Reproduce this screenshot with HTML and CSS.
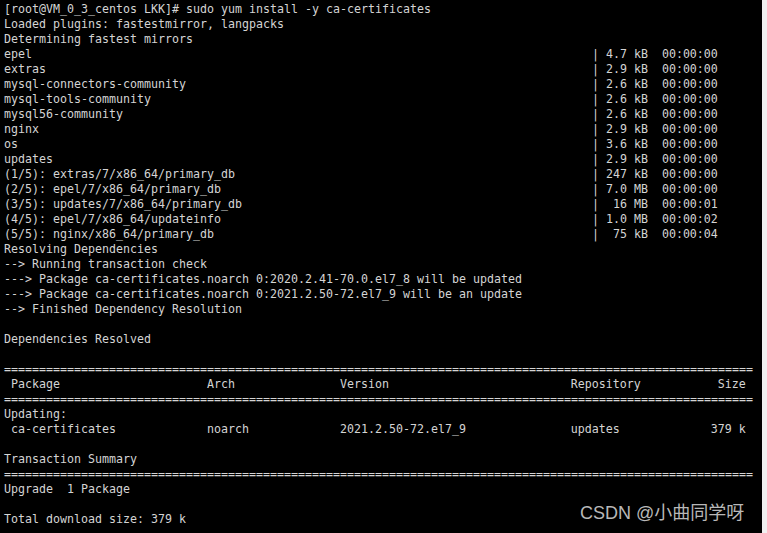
FILE: index.html
```html
<!DOCTYPE html>
<html>
<head>
<meta charset="utf-8">
<link rel="stylesheet" href="styles.css">
</head>
<body>
<div class="screen">
  <div class="term">
    <div class="ln">[root@VM_0_3_centos LKK]# sudo yum install -y ca-certificates</div>
    <div class="ln">Loaded plugins: fastestmirror, langpacks</div>
    <div class="ln">Determining fastest mirrors</div>
    <div class="ln"><span class="nm">epel</span>| 4.7 kB  00:00:00</div>
    <div class="ln"><span class="nm">extras</span>| 2.9 kB  00:00:00</div>
    <div class="ln"><span class="nm">mysql-connectors-community</span>| 2.6 kB  00:00:00</div>
    <div class="ln"><span class="nm">mysql-tools-community</span>| 2.6 kB  00:00:00</div>
    <div class="ln"><span class="nm">mysql56-community</span>| 2.6 kB  00:00:00</div>
    <div class="ln"><span class="nm">nginx</span>| 2.9 kB  00:00:00</div>
    <div class="ln"><span class="nm">os</span>| 3.6 kB  00:00:00</div>
    <div class="ln"><span class="nm">updates</span>| 2.9 kB  00:00:00</div>
    <div class="ln"><span class="nm">(1/5): extras/7/x86_64/primary_db</span>| 247 kB  00:00:00</div>
    <div class="ln"><span class="nm">(2/5): epel/7/x86_64/primary_db</span>| 7.0 MB  00:00:00</div>
    <div class="ln"><span class="nm">(3/5): updates/7/x86_64/primary_db</span>|  16 MB  00:00:01</div>
    <div class="ln"><span class="nm">(4/5): epel/7/x86_64/updateinfo</span>| 1.0 MB  00:00:02</div>
    <div class="ln"><span class="nm">(5/5): nginx/x86_64/primary_db</span>|  75 kB  00:00:04</div>
    <div class="ln">Resolving Dependencies</div>
    <div class="ln">--&gt; Running transaction check</div>
    <div class="ln">---&gt; Package ca-certificates.noarch 0:2020.2.41-70.0.el7_8 will be updated</div>
    <div class="ln">---&gt; Package ca-certificates.noarch 0:2021.2.50-72.el7_9 will be an update</div>
    <div class="ln">--&gt; Finished Dependency Resolution</div>
    <div class="ln"> </div>
    <div class="ln">Dependencies Resolved</div>
    <div class="ln"> </div>
    <div class="ln">===========================================================================================================</div>
    <div class="ln row"><span class="c1">Package</span><span class="c2">Arch</span><span class="c3">Version</span><span class="c4">Repository</span><span class="c5">Size</span></div>
    <div class="ln">===========================================================================================================</div>
    <div class="ln">Updating:</div>
    <div class="ln row"><span class="c1">ca-certificates</span><span class="c2">noarch</span><span class="c3">2021.2.50-72.el7_9</span><span class="c4">updates</span><span class="c5">379 k</span></div>
    <div class="ln"> </div>
    <div class="ln">Transaction Summary</div>
    <div class="ln">===========================================================================================================</div>
    <div class="ln">Upgrade  1 Package</div>
    <div class="ln"> </div>
    <div class="ln">Total download size: 379 k</div>
    <div class="mark">CSDN @小曲同学呀</div>
  </div>
  <div class="edge"></div>
</div>
</body>
</html>
```

FILE: styles.css
```css
html, body {
  margin: 0;
  padding: 0;
  background: #f0f0f0;
}
.screen {
  display: flex;
  width: 767px;
  height: 533px;
  overflow: hidden;
}
.term {
  position: relative;
  width: 762px;
  height: 533px;
  background: #000;
  color: #d4d4d4;
  font-family: "DejaVu Sans Mono", monospace;
  font-size: 11.63px;
  line-height: 15px;
  padding: 2px 0 0 4px;
  box-sizing: border-box;
  overflow: hidden;
}
.edge {
  flex: 1;
  background: #f0f0f0;
}
.ln {
  white-space: pre;
  height: 15px;
}
.nm {
  display: inline-block;
  width: 84ch;
}
.row span {
  display: inline-block;
}
.c1 { width: 28ch; padding-left: 1ch; }
.c2 { width: 19ch; }
.c3 { width: 33ch; }
.c4 { width: 14ch; }
.c5 { width: 11ch; text-align: right; }
.mark {
  position: absolute;
  left: 580px;
  top: 502px;
  font-family: "Liberation Sans", "Noto Sans CJK SC", sans-serif;
  font-size: 18px;
  line-height: 22px;
  color: #b8b8b8;
  white-space: nowrap;
}
```
